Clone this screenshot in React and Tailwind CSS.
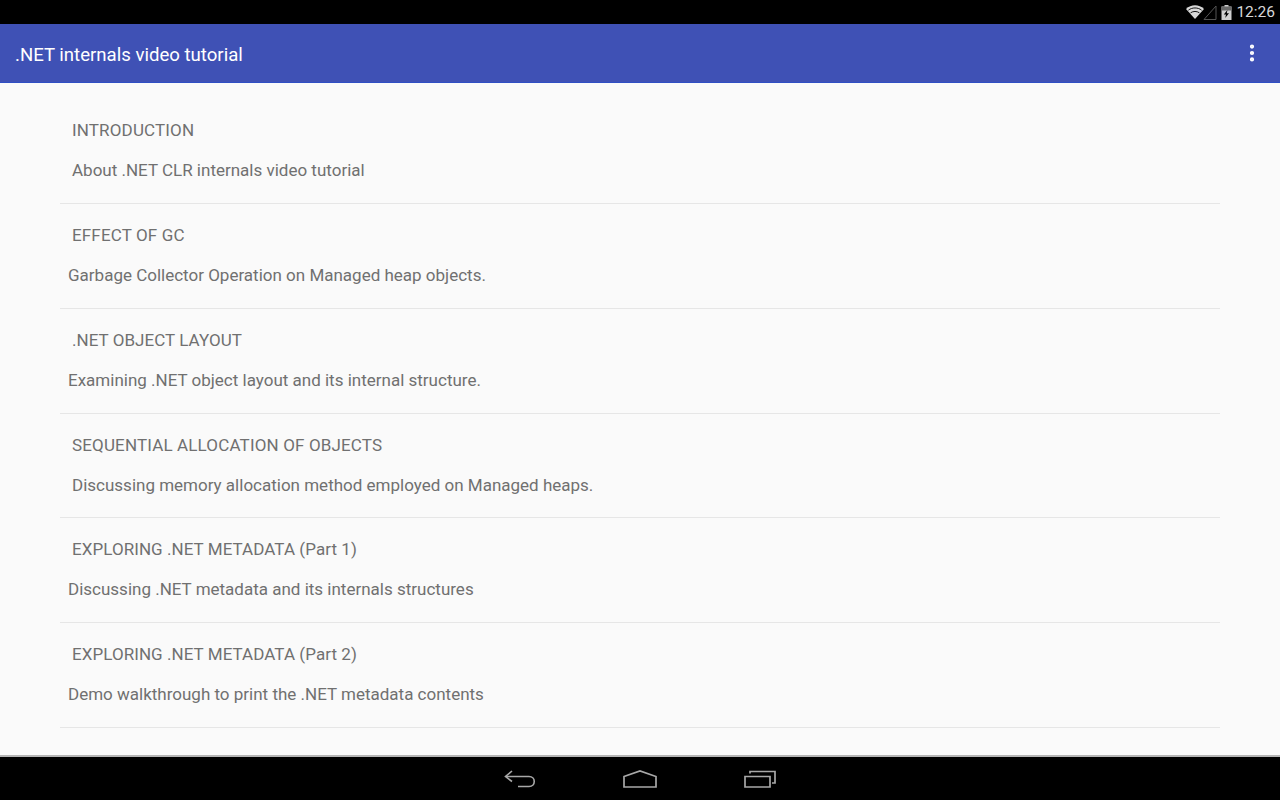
import { MoreVertical } from 'lucide-react';

const LESSONS = [
  { title: 'INTRODUCTION', text: 'About .NET CLR internals video tutorial', indent: 'pl-3', tracking: 'tracking-[0.15px]' },
  { title: 'EFFECT OF GC', text: 'Garbage Collector Operation on Managed heap objects.', indent: 'pl-2', tracking: 'tracking-[0.15px]' },
  { title: '.NET OBJECT LAYOUT', text: 'Examining .NET object layout and its internal structure.', indent: 'pl-2', tracking: 'tracking-[0.05px]' },
  { title: 'SEQUENTIAL ALLOCATION OF OBJECTS', text: 'Discussing memory allocation method employed on Managed heaps.', indent: 'pl-3', tracking: 'tracking-[0.15px]' },
  { title: 'EXPLORING .NET METADATA (Part 1)', text: 'Discussing .NET metadata and its internals structures', indent: 'pl-2', tracking: 'tracking-[0.06px]' },
  { title: 'EXPLORING .NET METADATA (Part 2)', text: 'Demo walkthrough to print the .NET metadata contents', indent: 'pl-2', tracking: 'tracking-[0.06px]' },
];

function StatusBar() {
  return (
    <div className="h-6 bg-black flex items-center justify-end pr-[5px] shrink-0">
      <svg width="18" height="14" viewBox="0 0 18 14">
        <path d="M0 4 C5 -1 13 -1 18 4 L9 14 Z" fill="#d8d8d8" />
        <path d="M2.4 5.2 C6 2.2 12 2.2 15.6 5.2" fill="none" stroke="#000" strokeWidth="0.9" />
        <path d="M4.6 7.8 C7.2 6 10.8 6 13.4 7.8" fill="none" stroke="#000" strokeWidth="0.9" />
      </svg>
      <svg width="14" height="15" viewBox="0 0 14 15" className="-ml-[1px]">
        <path d="M13 1 V14.5 H1 Z" fill="none" stroke="#555555" strokeWidth="1" />
      </svg>
      <svg width="11" height="15" viewBox="0 0 11 15" className="ml-[4px]">
        <path d="M3.5 0 H7.5 V1.5 H10.5 V15 H0.5 V1.5 H3.5 Z" fill="#d0d0d0" />
        <path d="M0.5 1.5 H10.5 V5.5 H0.5 Z" fill="#6a6a6a" />
        <path d="M6.4 5 L2.8 9.6 H5 L4.2 13 L8 8.2 H5.8 Z" fill="#000" />
      </svg>
      <span className="text-[#d8d8d8] text-[15.5px] leading-6 ml-[4px]">12:26</span>
    </div>
  );
}

function AppBar() {
  return (
    <div className="h-[59px] bg-[#3f51b5] border-b border-[#2f4fc4] flex items-center justify-between pl-[15px] pr-[17px] shrink-0">
      <h1 className="text-white text-[18.6px] leading-6 mt-[3px]">.NET internals video tutorial</h1>
      <MoreVertical size={22} color="#ffffff" strokeWidth={2.6} />
    </div>
  );
}

function LessonRow({ lesson }) {
  return (
    <div className="h-[104.8px] flex flex-col border-b border-[#e6e6e6] pt-[19px]">
      <div className={`${lesson.tracking} pl-3 text-[17px] leading-6 text-[#707070]`}>{lesson.title}</div>
      <div className={`${lesson.indent} mt-4 text-[17px] leading-6 text-[#707070]`}>{lesson.text}</div>
    </div>
  );
}

function NavBar() {
  return (
    <div className="h-[45px] bg-black border-t-2 border-[#b5b5b5] flex items-center justify-center gap-[87px] shrink-0">
      <svg width="32" height="18" viewBox="0 0 32 18" fill="none" stroke="#a8a8a8" strokeWidth="1.6">
        <path d="M8 1 L1.5 6.5 L8 11.5" />
        <path d="M2 6.5 H25 C32 6.5 32 16.5 25 16.5 H14" />
      </svg>
      <svg width="34" height="18" viewBox="0 0 34 18" fill="none" stroke="#a8a8a8" strokeWidth="1.7">
        <path d="M1 6.5 L17 1 L33 6.5 V17 H1 Z" />
      </svg>
      <svg width="32" height="18" viewBox="0 0 32 18" fill="none" stroke="#a8a8a8" strokeWidth="1.7">
        <path d="M1 6.5 H26 V17 H1 Z" />
        <path d="M6 3.5 V1.5 H31 V13 H28" />
      </svg>
    </div>
  );
}

export default function App() {
  return (
    <div className="w-[1280px] h-[800px] flex flex-col overflow-hidden bg-[#fafafa] font-['Roboto',sans-serif]">
      <StatusBar />
      <AppBar />
      <div className="flex-1 px-[60px] pt-[16.2px] overflow-hidden">
        {LESSONS.map(lesson => (
          <LessonRow key={lesson.title} lesson={lesson} />
        ))}
      </div>
      <NavBar />
    </div>
  );
}
